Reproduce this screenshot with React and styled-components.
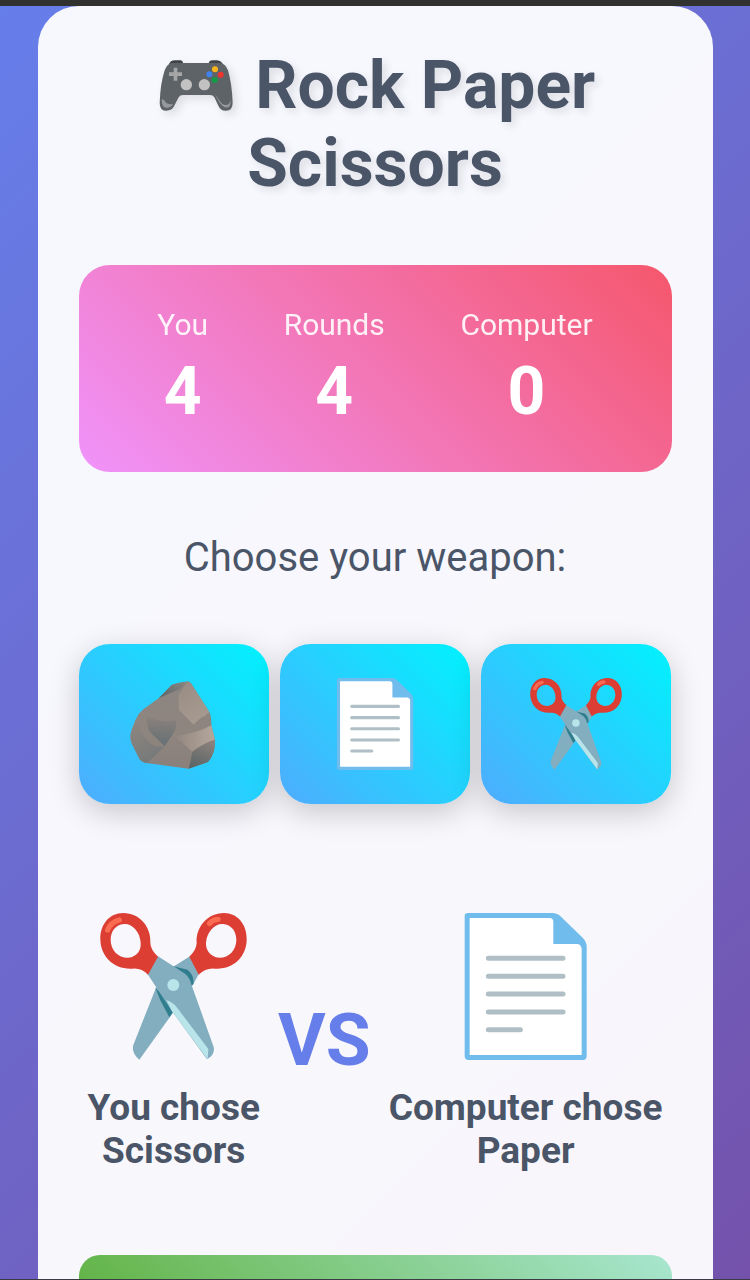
import React from 'react';
import styled, { createGlobalStyle } from 'styled-components';

const GlobalStyle = createGlobalStyle`
  * { box-sizing: border-box; }
  body {
    margin: 0;
    font-family: Roboto, "Liberation Sans", sans-serif;
    color: #4a5568;
  }
`;

const Screen = styled.div`
  height: 100vh;
  border-top: 6px solid #31312f;
  border-bottom: 1px solid #3c3a44;
  overflow-y: auto;
  scrollbar-width: none;
`;

const Backdrop = styled.div`
  padding: 0 5% 160px;
  background: linear-gradient(135deg, #667eea 0%, #764ba2 100%);
`;

const Card = styled.main`
  padding: 41px;
  border-radius: 41px;
  background: rgba(255, 255, 255, 0.95);
  text-align: center;
`;

const Title = styled.h1`
  margin: 0 0 62px;
  font-size: 66px;
  line-height: 78px;
  font-weight: 700;
  text-shadow: 4px 4px 8px rgba(0, 0, 0, 0.1);

  svg {
    width: 81px;
    height: 57px;
    margin-right: 3px;
    vertical-align: -6px;
    filter: drop-shadow(4px 4px 4px rgba(0, 0, 0, 0.1));
  }
`;

const ScoreBoard = styled.section`
  display: flex;
  justify-content: space-around;
  margin-bottom: 62px;
  padding: 41px;
  border-radius: 31px;
  background: linear-gradient(45deg, #f093fb 0%, #f5576c 100%);
  color: #fff;
`;

const ScoreLabel = styled.div`
  margin-bottom: 10px;
  font-size: 30px;
  line-height: 37px;
  opacity: 0.9;
`;

const ScoreValue = styled.div`
  font-size: 66px;
  line-height: 78px;
  font-weight: 700;
`;

const Prompt = styled.h2`
  margin: 0 0 62px;
  font-size: 40px;
  line-height: 48px;
  font-weight: 400;
`;

const Choices = styled.div`
  display: grid;
  grid-template-columns: repeat(3, 1fr);
  gap: 11px;
  margin-bottom: 62px;
`;

const ChoiceButton = styled.button`
  display: flex;
  align-items: center;
  justify-content: center;
  height: 160px;
  padding: 0;
  border: 0;
  border-radius: 31px;
  background: linear-gradient(45deg, #4facfe 0%, #00f2fe 100%);
  box-shadow: 0 8px 31px rgba(0, 0, 0, 0.2);
  cursor: pointer;

  svg {
    width: 92px;
    height: 92px;
  }
`;

const Arena = styled.section`
  display: flex;
  align-items: center;
  justify-content: space-around;
  margin-bottom: 42px;
  padding: 41px 0;
`;

const Pick = styled.div`
  padding-top: 6px;

  svg {
    display: block;
    width: 147px;
    height: 147px;
    margin: 0 auto 26px;
  }
`;

const PickText = styled.div`
  font-size: 37px;
  line-height: 43px;
  font-weight: 700;

  span { display: block; }
`;

const Versus = styled.div`
  font-size: 73px;
  line-height: 84px;
  font-weight: 700;
  color: #667eea;
`;

const ResultPanel = styled.div`
  height: 140px;
  border-radius: 21px;
  background: linear-gradient(45deg, #56ab2f 0%, #a8e6cf 100%);
`;

function GamepadIcon() {
  return (
    <svg viewBox="42 51 243 171" aria-hidden="true">
      <path d="M84 73Q88 61 101 61H118Q126 62 126 70H203Q204 61 215 61H228Q241 62 246 74L230 82H98Z" fill="#414446" />
      <path d="M92 69H238Q254 72 261 91Q273 132 275 188Q275 212 255 212Q239 213 232 197L220 172Q216 165 207 165H126Q117 165 113 172L99 199Q92 213 74 212Q56 211 56 188Q58 131 71 91Q78 72 92 69Z" fill="#5e6367" />
      <path d="M62 178Q62 207 81 203Q93 200 96 192Q77 196 69 179ZM269 181Q270 207 252 202Q236 195 222 161Q234 181 244 192Q263 202 269 181Z" fill="#96999c" />
      <path d="M98 83H109V97H123V108H109V122H98V108H84V97H98Z" fill="#a5a6a7" />
      <circle cx="136" cy="134" r="17" fill="#c2c2c2" />
      <circle cx="190" cy="134" r="17" fill="#c2c2c2" />
      <circle cx="222" cy="88" r="9" fill="#f9b51c" />
      <circle cx="205" cy="103" r="9" fill="#3d82ed" />
      <circle cx="239" cy="104" r="9" fill="#ed3430" />
      <circle cx="221" cy="120" r="9" fill="#129c45" />
    </svg>
  );
}

function RockIcon() {
  return (
    <svg viewBox="54 51 276 276" aria-hidden="true">
      <defs>
        <linearGradient id="rockBody" x1="0" y1="0" x2="0" y2="1">
          <stop offset="0" stopColor="#8c8581" />
          <stop offset=".6" stopColor="#8f857f" />
          <stop offset="1" stopColor="#8a807b" />
        </linearGradient>
        <linearGradient id="rockPeak" x1="1" y1="0" x2="0" y2="1">
          <stop offset="0" stopColor="#8d8681" />
          <stop offset="1" stopColor="#566468" />
        </linearGradient>
        <linearGradient id="rockHollow" x1="0" y1="0" x2="0" y2="1">
          <stop offset="0" stopColor="#8a817d" />
          <stop offset="1" stopColor="#657073" />
        </linearGradient>
        <linearGradient id="rockFace" x1="0" y1="0" x2=".4" y2="1">
          <stop offset="0" stopColor="#978b83" />
          <stop offset="1" stopColor="#a69a90" />
        </linearGradient>
        <linearGradient id="rockLedge" x1="0" y1="0" x2="1" y2="0">
          <stop offset="0" stopColor="#92877f" />
          <stop offset="1" stopColor="#b5a79c" />
        </linearGradient>
        <linearGradient id="rockLeft" x1="0" y1="0" x2=".5" y2="1">
          <stop offset="0" stopColor="#91877f" />
          <stop offset="1" stopColor="#76797a" />
        </linearGradient>
        <linearGradient id="rockSide" x1=".7" y1="0" x2=".3" y2="1">
          <stop offset="0" stopColor="#8c817b" />
          <stop offset="1" stopColor="#5a6568" />
        </linearGradient>
      </defs>
      <path d="M185 72L234 61Q240 62 244 68L298 153Q304 164 304 192L315 237L313 264Q309 285 294 303L236 323L104 305Q94 303 89 295L65 247Q58 229 65 207L78 174Q86 156 100 145L148 110Z" fill="url(#rockBody)" />
      <path d="M146 112L185 72Q205 63 232 62L214 82Z" fill="url(#rockPeak)" />
      <path d="M205 103L232 62Q240 62 244 68L298 153L284 165Q266 173 251 191L207 147Z" fill="url(#rockFace)" />
      <path d="M78 174L65 207Q58 229 65 247L89 295Q94 303 104 305L112 306L163 257Q132 261 112 237Q93 218 78 174Z" fill="url(#rockLeft)" />
      <path d="M109 166Q155 188 199 178Q199 207 190 217L164 256L119 212Q112 202 109 166Z" fill="url(#rockHollow)" />
      <path d="M195 226Q263 216 304 193L315 236Q281 246 247 272Z" fill="url(#rockLedge)" />
      <path d="M247 272Q281 246 315 236L313 264Q309 285 294 303L236 323Q243 298 247 272Z" fill="url(#rockSide)" />
    </svg>
  );
}

function PaperIcon() {
  return (
    <svg viewBox="1 39 441 441" aria-hidden="true">
      <path d="M49 39H302Q317 39 328 50L393 113Q405 125 405 141V468Q405 480 393 480H51Q39 480 39 468V49Q39 39 49 39Z" fill="#70bcec" />
      <path d="M54 54H294Q305 54 305 66V132H375Q390 132 390 149V465H54Z" fill="#fff" />
      <path d="M110 175H334M110 229H334M110 282H334M110 336H334M110 389H206" fill="none" stroke="#b0bec5" strokeWidth="15" strokeLinecap="round" />
    </svg>
  );
}

function ScissorsIcon() {
  return (
    <svg viewBox="36 39 441 441" aria-hidden="true">
      <path d="M306 169L258 199L204 263L136 435Q130 459 154 479L253 341L316 253L332 223Z" fill="#82aec0" />
      <path d="M256 199L298 209Q319 223 316 253L306 258L294 226ZM202 263L236 298L254 337L244 352L217 301Z" fill="#2f7d8d" />
      <path d="M209 168L260 201L291 221Q306 233 311 256L377 441Q382 463 357 478L251 332L179 223Z" fill="#82aec0" />
      <path d="M235 300Q257 307 272 329L361 447L359 478L252 334Z" fill="#b9e4ea" />
      <circle cx="256" cy="255" r="18" fill="#b9e4ea" />
      <path fillRule="evenodd" d="M37 118C36 73 65 39 105 39C157 39 190 83 187 128Q187 148 210 170L180 224Q160 203 133 206C78 209 38 171 37 118ZM68 119C68 151 91 174 121 173C147 170 160 151 158 128C156 95 133 70 108 72C82 74 68 95 68 119Z" fill="#dc3e34" />
      <path fillRule="evenodd" d="M476 118C477 73 448 39 408 39C357 39 323 83 326 128Q326 148 304 170L332 224Q354 203 381 206C436 209 476 171 476 118ZM445 119C445 151 422 174 393 173C367 170 353 151 354 128C357 95 380 70 405 72C431 74 445 95 445 119Z" fill="#dc3e34" />
      <path d="M59 90Q69 66 94 60M365 70Q375 58 390 58" fill="none" stroke="#fb6b51" strokeWidth="16" strokeLinecap="round" />
    </svg>
  );
}

const scores = [
  { label: 'You', value: 4 },
  { label: 'Rounds', value: 4 },
  { label: 'Computer', value: 0 },
];

const weapons = [
  { name: 'Rock', Icon: RockIcon },
  { name: 'Paper', Icon: PaperIcon },
  { name: 'Scissors', Icon: ScissorsIcon },
];

export default function App() {
  return (
    <Screen>
      <GlobalStyle />
      <Backdrop>
        <Card>
          <Title><GamepadIcon /> Rock Paper Scissors</Title>
          <ScoreBoard>
            {scores.map(({ label, value }) => (
              <div key={label}>
                <ScoreLabel>{label}</ScoreLabel>
                <ScoreValue>{value}</ScoreValue>
              </div>
            ))}
          </ScoreBoard>
          <Prompt>Choose your weapon:</Prompt>
          <Choices>
            {weapons.map(({ name, Icon }) => (
              <ChoiceButton key={name} type="button" aria-label={name}>
                <Icon />
              </ChoiceButton>
            ))}
          </Choices>
          <Arena>
            <Pick>
              <ScissorsIcon />
              <PickText><span>You chose</span><span>Scissors</span></PickText>
            </Pick>
            <Versus>VS</Versus>
            <Pick>
              <PaperIcon />
              <PickText><span>Computer chose</span><span>Paper</span></PickText>
            </Pick>
          </Arena>
          <ResultPanel role="status" />
        </Card>
      </Backdrop>
    </Screen>
  );
}
